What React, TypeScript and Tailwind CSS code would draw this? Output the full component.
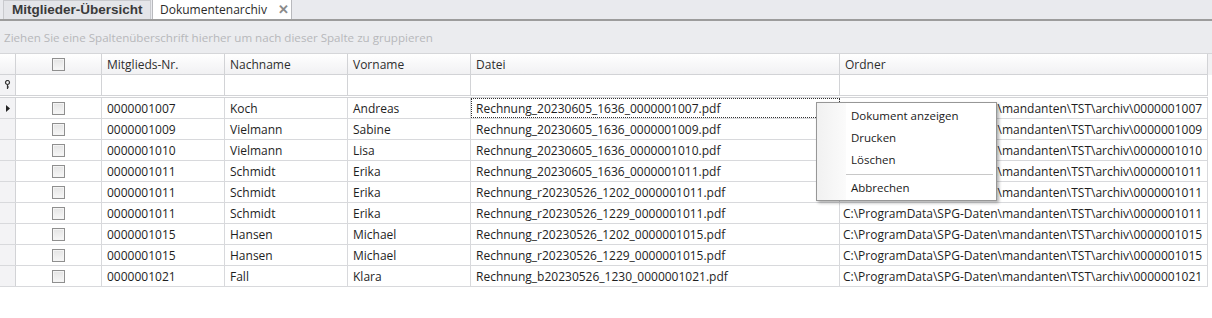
import { FC } from "react";

const rows = [
  ["0000001007", "Koch", "Andreas", "Rechnung_20230605_1636_0000001007.pdf", "C:\\ProgramData\\SPG-Daten\\mandanten\\TST\\archiv\\0000001007"],
  ["0000001009", "Vielmann", "Sabine", "Rechnung_20230605_1636_0000001009.pdf", "C:\\ProgramData\\SPG-Daten\\mandanten\\TST\\archiv\\0000001009"],
  ["0000001010", "Vielmann", "Lisa", "Rechnung_20230605_1636_0000001010.pdf", "C:\\ProgramData\\SPG-Daten\\mandanten\\TST\\archiv\\0000001010"],
  ["0000001011", "Schmidt", "Erika", "Rechnung_20230605_1636_0000001011.pdf", "C:\\ProgramData\\SPG-Daten\\mandanten\\TST\\archiv\\0000001011"],
  ["0000001011", "Schmidt", "Erika", "Rechnung_r20230526_1202_0000001011.pdf", "C:\\ProgramData\\SPG-Daten\\mandanten\\TST\\archiv\\0000001011"],
  ["0000001011", "Schmidt", "Erika", "Rechnung_r20230526_1229_0000001011.pdf", "C:\\ProgramData\\SPG-Daten\\mandanten\\TST\\archiv\\0000001011"],
  ["0000001015", "Hansen", "Michael", "Rechnung_r20230526_1202_0000001015.pdf", "C:\\ProgramData\\SPG-Daten\\mandanten\\TST\\archiv\\0000001015"],
  ["0000001015", "Hansen", "Michael", "Rechnung_r20230526_1229_0000001015.pdf", "C:\\ProgramData\\SPG-Daten\\mandanten\\TST\\archiv\\0000001015"],
  ["0000001021", "Fall", "Klara", "Rechnung_b20230526_1230_0000001021.pdf", "C:\\ProgramData\\SPG-Daten\\mandanten\\TST\\archiv\\0000001021"],
];

const cols = "grid grid-cols-[16px_86px_123px_123px_123px_369px_368px]";

const Checkbox: FC = () => (
  <div className="w-[13px] h-[13px] border border-[#8f8f8f] bg-gradient-to-b from-[#e4e4e4] to-[#f7f7f7] shadow-[inset_0_0_0_1px_#f4f4f4]" />
);

const ContextMenu: FC = () => (
  <div className="absolute left-[816px] top-[102px] w-[181px] h-[99px] border border-[#979797] bg-white shadow-[2px_2px_3px_rgba(0,0,0,0.3)] flex">
    <div className="w-[29px] bg-gradient-to-r from-[#f1f1f1] to-[#fbfbfb]" />
    <div className="flex-1 pt-[2px] text-[11.5px] text-[#1a1a1a]">
      <div className="h-[22px] flex items-center pl-[5px]">Dokument anzeigen</div>
      <div className="h-[22px] flex items-center pl-[5px]">Drucken</div>
      <div className="h-[22px] flex items-center pl-[5px]">Löschen</div>
      <div className="h-[6px] flex items-center pr-[3px]">
        <div className="h-px w-full bg-[#c8c8c8]" />
      </div>
      <div className="h-[22px] flex items-center pl-[5px]">Abbrechen</div>
    </div>
  </div>
);

const App: FC = () => {
  return (
    <div className="relative w-[1212px] h-[318px] bg-white overflow-hidden text-[12px] text-[#1e1e1e] [font-family:'Open_Sans','Noto_Sans',sans-serif]">
      {/* tab strip */}
      <div className="h-[21px] bg-[#e9eaee] flex items-end border-b-2 border-[#9c9c9c]">
        <div className="ml-[3px] h-[19px] w-[148px] border-l border-t border-r border-[#c9cace] bg-[#e4e5e9] flex items-center pl-[8px] font-bold text-[#3a3a3a] [font-family:'Liberation_Sans',sans-serif] text-[13.5px]">
          Mitglieder-Übersicht
        </div>
        <div className="ml-px h-[20px] w-[140px] border-l border-t border-r border-[#b8b9bd] bg-white flex items-center pl-[7px] text-[#2a2a2a]">
          <span>Dokumentenarchiv</span>
          <span className="ml-[11px] text-[#8a8a8a] font-bold text-[13px] leading-none">✕</span>
        </div>
      </div>

      {/* group panel */}
      <div className="h-[33px] bg-[#ebecef] flex items-center pl-[4px] pt-[2px] text-[11.6px] text-[#b7b8bb] border-b border-[#d5d6d9]">
        Ziehen Sie eine Spaltenüberschrift hierher um nach dieser Spalte zu gruppieren
      </div>

      {/* header */}
      <div className="flex">
        <div className={`${cols} h-[21px] bg-gradient-to-b from-white to-[#f1f1f3] border-b border-[#d2d3d6] text-[#2e2e2e]`}>
          <div className="border-r border-[#d2d3d6]" />
          <div className="border-r border-[#d2d3d6] flex items-center justify-center">
            <Checkbox />
          </div>
          <div className="border-r border-[#d2d3d6] flex items-center pl-[5px] pt-[2px]">Mitglieds-Nr.</div>
          <div className="border-r border-[#d2d3d6] flex items-center pl-[5px] pt-[2px]">Nachname</div>
          <div className="border-r border-[#d2d3d6] flex items-center pl-[5px] pt-[2px]">Vorname</div>
          <div className="border-r border-[#d2d3d6] flex items-center pl-[5px] pt-[2px]">Datei</div>
          <div className="border-r border-[#d2d3d6] flex items-center pl-[5px] pt-[2px]">Ordner</div>
        </div>
        <div className="flex-1 bg-[#f1f1f3]" />
      </div>

      {/* filter row */}
      <div className="flex">
        <div className={`${cols} h-[23px] border-b-[3px] border-double border-[#d2d3d6]`}>
          <div className="border-r border-[#d2d3d6] bg-[#f3f3f5] flex items-center justify-center">
            <svg width="7" height="10" viewBox="0 0 7 10">
              <circle cx="3.5" cy="2.5" r="2" fill="none" stroke="#333" strokeWidth="1.2" />
              <path d="M3.5 4.5 V9 M3.5 7 H5" stroke="#333" strokeWidth="1.2" fill="none" />
            </svg>
          </div>
          <div className="border-r border-[#d2d3d6]" />
          <div className="border-r border-[#d2d3d6]" />
          <div className="border-r border-[#d2d3d6]" />
          <div className="border-r border-[#d2d3d6]" />
          <div className="border-r border-[#d2d3d6]" />
          <div className="border-r border-[#d2d3d6]" />
        </div>
      </div>

      {/* data rows */}
      {rows.map((r, i) => (
        <div key={i} className="flex">
          <div className={`${cols} h-[21px] border-b border-[#d8d9dc]`}>
            <div className="border-r border-[#d2d3d6] bg-[#f3f3f5] flex items-center justify-center">
              {i === 0 && (
                <svg width="4" height="7" viewBox="0 0 4 7">
                  <path d="M0 0 L4 3.5 L0 7 Z" fill="#222" />
                </svg>
              )}
            </div>
            <div className="border-r border-[#d8d9dc] flex items-center justify-center">
              <Checkbox />
            </div>
            <div className="border-r border-[#d8d9dc] flex items-center pl-[5px] pt-px">{r[0]}</div>
            <div className="border-r border-[#d8d9dc] flex items-center pl-[5px] pt-px">{r[1]}</div>
            <div className="border-r border-[#d8d9dc] flex items-center pl-[5px] pt-px">{r[2]}</div>
            <div
              className={`border-r border-[#d8d9dc] flex items-center pl-[5px] pt-px ${
                i === 0 ? "outline-1 outline-dotted outline-[#333] -outline-offset-1" : ""
              }`}
            >
              {r[3]}
            </div>
            <div className="border-r border-[#d8d9dc] flex items-center pl-[3px] pt-px whitespace-nowrap">{r[4]}</div>
          </div>
        </div>
      ))}

      <ContextMenu />
    </div>
  );
};

export default App;
